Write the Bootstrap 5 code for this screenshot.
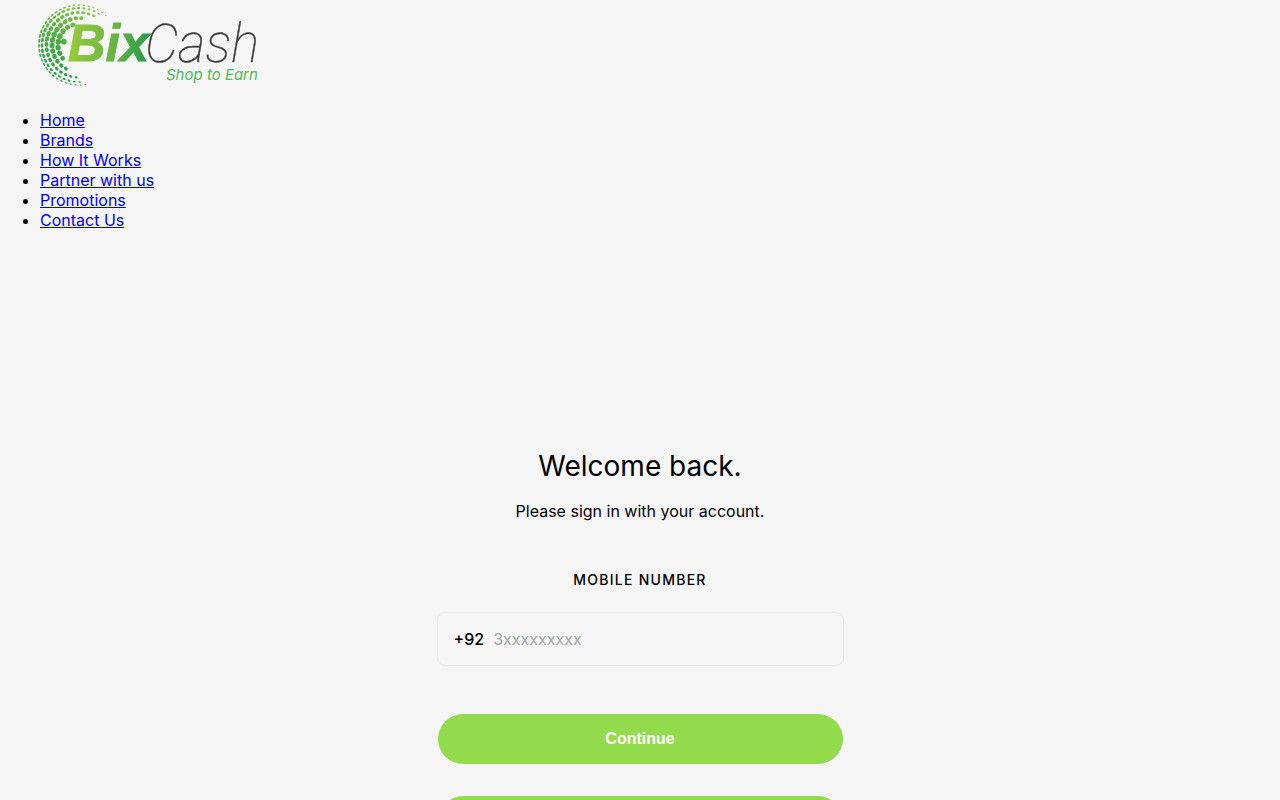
<!DOCTYPE html>
<html lang="en">
<head>
<meta charset="utf-8">
<meta name="viewport" content="width=device-width, initial-scale=1">
<title>BixCash</title>
<link href="https://cdn.jsdelivr.net/npm/bootstrap@5.3.0/dist/css/bootstrap.min.css" rel="stylesheet">
<style>
body { background: #f5f5f5; color: #000; font-family: Inter, sans-serif; line-height: 20px; }
.brand-logo { width: 300px; height: 94px; }
.site-links { padding-left: 40px; }
.site-links a { color: #0000ee; }
.sign-in { max-width: 407px; margin-top: 217px; }
.welcome { font-size: 28px; line-height: 38px; font-weight: 400; }
.field-label { font-size: 14px; line-height: 22px; font-weight: 500; letter-spacing: .09em; margin-bottom: 21px; }
.phone-box { height: 54px; border: 1px solid #e5e7eb; border-radius: 8px; gap: 9px; }
.phone-box input { color: #000; outline: 0; }
.phone-box input::placeholder { color: #9ca3af; }
.sign-in-actions { gap: 32px; padding: 0 1px; }
.btn-lime { --bs-btn-color: #fff; --bs-btn-bg: #93db4d; --bs-btn-hover-color: #fff; --bs-btn-hover-bg: #84cc3f; height: 50px; font-family: "Liberation Sans", sans-serif; }
</style>
</head>
<body>
<header>
  <a href="#" class="d-block" aria-label="BixCash">
    <svg class="brand-logo d-block" viewBox="0 0 300 94" role="img" aria-label="BixCash, Shop to Earn">
      <defs>
        <linearGradient id="bixFill" gradientUnits="userSpaceOnUse" x1="68" y1="40" x2="148" y2="50">
          <stop offset="0" stop-color="#9aca3c"/><stop offset=".5" stop-color="#6fb843"/><stop offset="1" stop-color="#2b9b48"/>
        </linearGradient>
        <linearGradient id="dotFill" gradientUnits="userSpaceOnUse" x1="85" y1="5" x2="60" y2="80">
          <stop offset="0" stop-color="#86c440"/><stop offset=".5" stop-color="#52ae47"/><stop offset="1" stop-color="#229a48"/>
        </linearGradient>
      </defs>
      <path id="globeDots" fill="url(#dotFill)"/>
      <text x="68" y="61" font-family="Liberation Sans, sans-serif" font-size="52" font-weight="700" font-style="italic" fill="url(#bixFill)" stroke="url(#bixFill)" stroke-width="1">Bix</text>
      <text x="145" y="62" font-family="Roboto, sans-serif" font-size="53" font-weight="100" font-style="italic" fill="#3c3c3e" stroke="#3c3c3e" stroke-width=".4">Cash</text>
      <text x="166" y="80" font-family="Inter, sans-serif" font-size="15" font-style="italic" fill="#4fb957">Shop to Earn</text>
    </svg>
  </a>
  <nav aria-label="Main" class="pt-3">
    <ul class="site-links mb-0">
      <li><a href="#">Home</a></li>
      <li><a href="#">Brands</a></li>
      <li><a href="#">How It Works</a></li>
      <li><a href="#">Partner with us</a></li>
      <li><a href="#">Promotions</a></li>
      <li><a href="#">Contact Us</a></li>
    </ul>
  </nav>
</header>
<main>
  <form class="sign-in mx-auto text-center">
    <h1 class="welcome mb-3">Welcome back.</h1>
    <p class="mb-5">Please sign in with your account.</p>
    <label for="mobile" class="field-label text-uppercase d-block">Mobile number</label>
    <div class="phone-box d-flex align-items-center px-3 mb-5">
      <span class="fw-medium">+92</span>
      <input id="mobile" type="tel" class="border-0 bg-transparent p-0 flex-grow-1" placeholder="3xxxxxxxxx">
    </div>
    <div class="sign-in-actions d-grid">
      <button type="submit" class="btn btn-lime rounded-pill fw-bold border-0">Continue</button>
      <button type="button" class="btn btn-lime rounded-pill fw-bold border-0" aria-label="Other sign-in option"></button>
    </div>
  </form>
</main>
<script>
// Globe: rings of ellipses seen on a sphere, thinning out towards both tips.
// Each ring: [radius, half extent in degrees, step in degrees, radial size, tangential size]
const rings = [[40,116,7,1,2.1],[37,112,8.2,1.6,2.4],[32.5,102,9.6,2.1,2.7],[27,84,12,2.7,3],[21,56,16,2.9,3.1],[15.5,16,23,2.9,3]];
let d = "";
rings.forEach(([r, ext, step, a, b], i) => {
  for (let t = -ext + (i % 2) * step / 2; t <= ext; t += step) {
    const deg = 197 + t, rad = deg * Math.PI / 180;
    const k = Math.sqrt(Math.max(.15, 1 - Math.abs(t) / 150));
    const x = 79 + r * Math.cos(rad), y = 45 + r * Math.sin(rad);
    const dx = a * k * Math.cos(rad), dy = a * k * Math.sin(rad);
    const arc = `A${a * k} ${b * k} ${deg} 1 1 `;
    d += `M${x - dx} ${y - dy}${arc}${x + dx} ${y + dy}${arc}${x - dx} ${y - dy}`;
  }
});
document.getElementById("globeDots").setAttribute("d", d);
</script>
<script src="https://cdn.jsdelivr.net/npm/bootstrap@5.3.0/dist/js/bootstrap.bundle.min.js"></script>
</body>
</html>
